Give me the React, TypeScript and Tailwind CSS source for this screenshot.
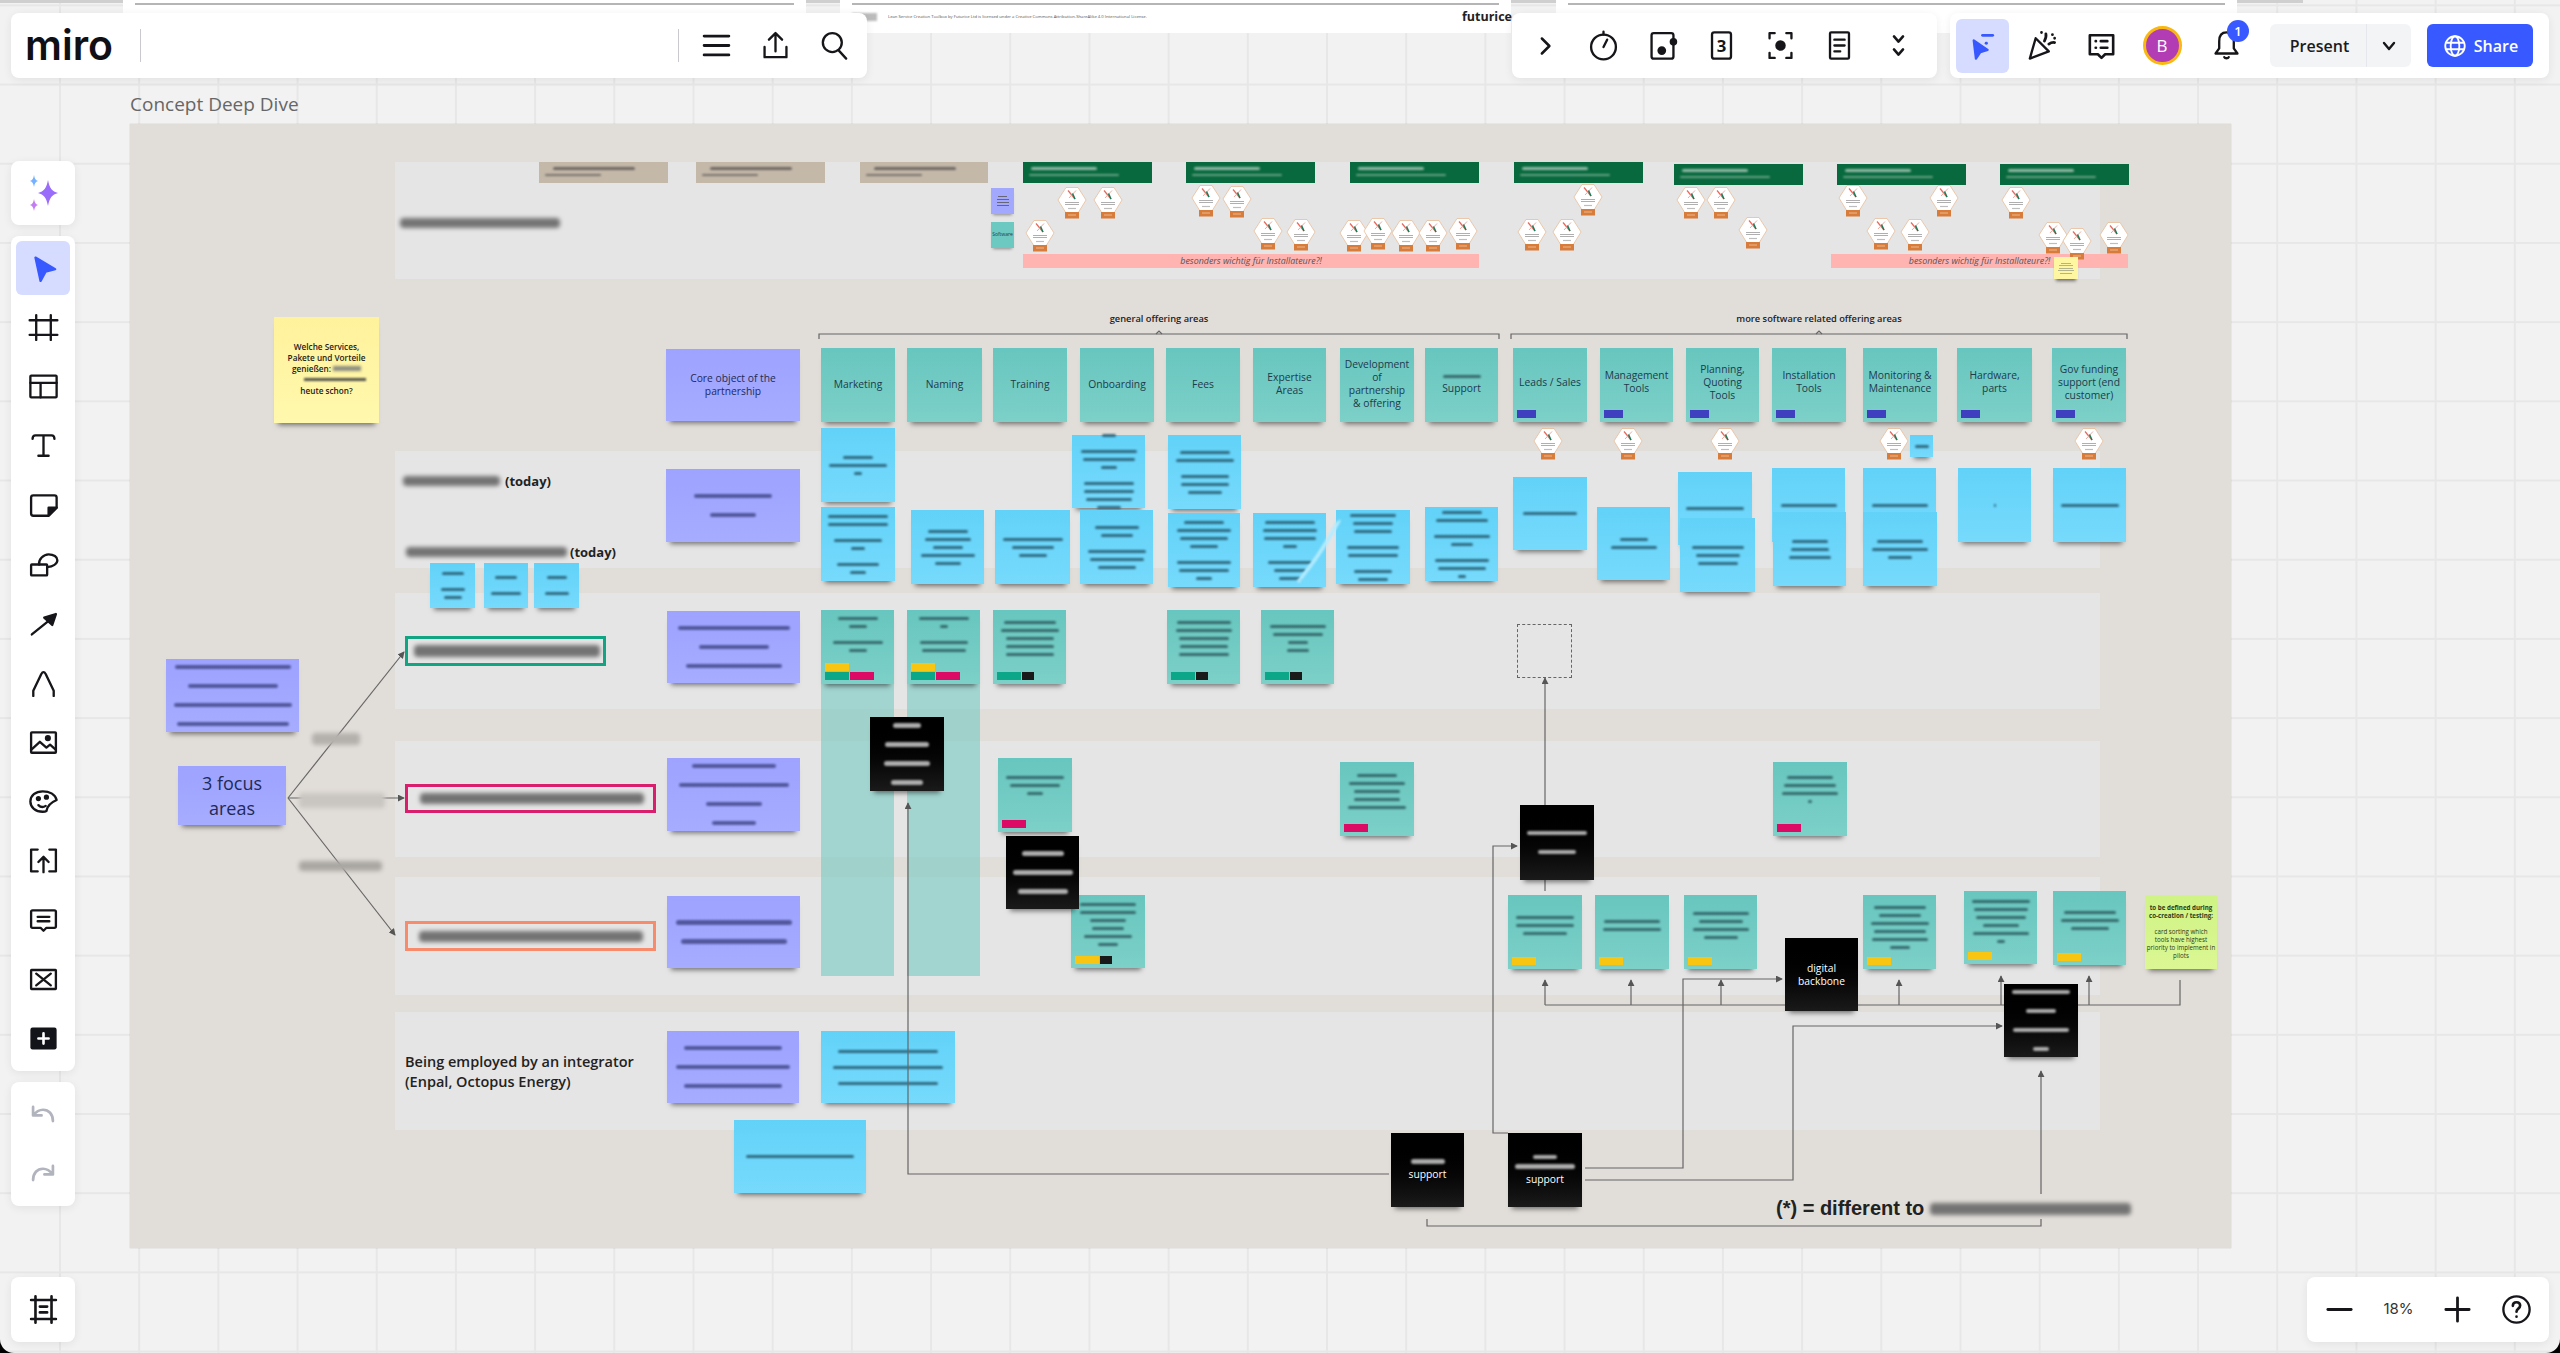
import React from 'react';

type Kind = 'teal' | 'blue' | 'purple' | 'black' | 'yellow' | 'green';
type Tag = [string, number];
interface St { k: Kind; x: number; y: number; w: number; h: number; t?: string[]; l?: number[]; pb?: number; tags?: Tag[][]; bar?: boolean; light?: boolean; fs?: number; }

const Y = 'bg-[#f9c513]', G = 'bg-[#0ca789]', P = 'bg-[#dc0a64]', K = 'bg-[#1a1a1a]';

const kindCls: Record<Kind, string> = {
  teal: 'bg-gradient-to-b from-[#67c6bf] to-[#7cd0c8] text-[#1e3a4c]',
  blue: 'bg-gradient-to-b from-[#62d2f8] to-[#76dafc] text-[#1e3a4c]',
  purple: 'bg-gradient-to-b from-[#9da3ff] to-[#a6acff] text-[#1f2a55]',
  black: 'bg-gradient-to-b from-[#000000] to-[#1a1a1a] text-[#dddddd]',
  yellow: 'bg-gradient-to-b from-[#fff29c] to-[#fff8ad] text-[#222222]',
  green: 'bg-gradient-to-b from-[#cff384] to-[#dbf794] text-[#2b3a1a]',
};
const lineCls: Record<Kind, string> = {
  teal: 'bg-[#2c5a60]',
  blue: 'bg-[#25596f]',
  purple: 'bg-[#454a8c]',
  black: 'bg-[#c9c9c9]',
  yellow: 'bg-[#555555]',
  green: 'bg-[#444444]',
};

const headers: [number, number, string[]][] = [
  [821, 74, ['Marketing']], [907, 75, ['Naming']], [993, 74, ['Training']], [1080, 74, ['Onboarding']],
  [1166, 74, ['Fees']], [1253, 73, ['Expertise', 'Areas']], [1340, 74, ['Development', 'of', 'partnership', '& offering']],
];
const headers2: [number, number, string[]][] = [
  [1513, 74, ['Leads / Sales']], [1600, 73, ['Management', 'Tools']], [1686, 73, ['Planning,', 'Quoting', 'Tools']], [1772, 74, ['Installation', 'Tools']],
  [1863, 74, ['Monitoring &', 'Maintenance']], [1957, 75, ['Hardware,', 'parts']], [2052, 74, ['Gov funding', 'support (end', 'customer)']],
];

const stickies: St[] = [
  { k: 'purple', x: 666, y: 349, w: 134, h: 72, t: ['Core object of the', 'partnership'] },
  ...headers.map(([x, w, t]) => ({ k: 'teal' as Kind, x, y: 348, w, h: 74, t, pb: 2 })),
  { k: 'teal', x: 1425, y: 348, w: 73, h: 74, l: [38], t: ['Support'], pb: 0 },
  ...headers2.map(([x, w, t]) => ({ k: 'teal' as Kind, x, y: 348, w, h: 74, t, bar: true, pb: 6 })),

  { k: 'blue', x: 821, y: 428, w: 74, h: 74, l: [30, 58, 8] },
  { k: 'blue', x: 1072, y: 435, w: 73, h: 73, l: [14, 0, 56, 52, 16, 0, 50, 50, 46, 24] },
  { k: 'blue', x: 1168, y: 435, w: 73, h: 74, l: [50, 58, 0, 48, 48, 34] },
  { k: 'blue', x: 1513, y: 477, w: 74, h: 73, l: [54] },
  { k: 'blue', x: 1678, y: 472, w: 74, h: 73, l: [58], pb: 0 },
  { k: 'blue', x: 1772, y: 468, w: 73, h: 74, l: [56], pb: 0 },
  { k: 'blue', x: 1863, y: 468, w: 73, h: 74, l: [56], pb: 0 },
  { k: 'blue', x: 1958, y: 468, w: 73, h: 74, l: [2] },
  { k: 'blue', x: 2053, y: 468, w: 73, h: 74, l: [58] },
  { k: 'blue', x: 1597, y: 507, w: 73, h: 73, l: [28, 46] },
  { k: 'blue', x: 1680, y: 518, w: 75, h: 74, l: [52, 44, 40] },
  { k: 'blue', x: 1773, y: 512, w: 73, h: 74, l: [36, 38, 42] },
  { k: 'blue', x: 1863, y: 512, w: 74, h: 74, l: [46, 56, 24] },

  { k: 'blue', x: 821, y: 507, w: 74, h: 74, l: [60, 60, 0, 48, 14, 0, 42, 16] },
  { k: 'blue', x: 911, y: 510, w: 73, h: 74, l: [40, 46, 30, 54, 26] },
  { k: 'blue', x: 995, y: 510, w: 75, h: 74, l: [60, 42, 28] },
  { k: 'blue', x: 1080, y: 510, w: 73, h: 74, l: [44, 32, 0, 58, 54, 38] },
  { k: 'blue', x: 1168, y: 513, w: 72, h: 74, l: [40, 54, 48, 28, 0, 54, 50, 16] },
  { k: 'blue', x: 1253, y: 513, w: 73, h: 74, l: [50, 54, 52, 14, 0, 44, 32, 22] },
  { k: 'blue', x: 1336, y: 510, w: 74, h: 74, l: [46, 40, 38, 0, 52, 50, 0, 38, 30] },
  { k: 'blue', x: 1425, y: 507, w: 73, h: 74, l: [40, 52, 0, 56, 22, 0, 54, 48, 8] },
  { k: 'blue', x: 430, y: 563, w: 45, h: 45, l: [22, 0, 24, 18] },
  { k: 'blue', x: 484, y: 563, w: 44, h: 45, l: [22, 0, 30] },
  { k: 'blue', x: 534, y: 563, w: 45, h: 45, l: [20, 0, 24] },
  { k: 'blue', x: 1910, y: 435, w: 23, h: 22, l: [14] },

  { k: 'purple', x: 666, y: 469, w: 134, h: 73, l: [78, 0, 46] },
  { k: 'purple', x: 667, y: 611, w: 133, h: 72, l: [112, 0, 70, 0, 96] },
  { k: 'purple', x: 667, y: 758, w: 133, h: 73, l: [84, 0, 110, 0, 56, 0, 44] },
  { k: 'purple', x: 667, y: 896, w: 133, h: 72, l: [116, 0, 106] },
  { k: 'purple', x: 667, y: 1031, w: 132, h: 72, l: [98, 0, 114, 0, 98] },
  { k: 'purple', x: 166, y: 659, w: 133, h: 73, l: [116, 0, 90, 0, 118, 0, 112] },
  { k: 'purple', x: 178, y: 766, w: 108, h: 59, t: ['3 focus', 'areas'], fs: 18 },

  { k: 'teal', x: 821, y: 610, w: 73, h: 74, l: [40, 18, 0, 50, 18], pb: 26, tags: [[[Y, 24]], [[G, 24], [P, 24]]] },
  { k: 'teal', x: 907, y: 610, w: 73, h: 74, l: [50, 8, 0, 48, 44], pb: 26, tags: [[[Y, 24]], [[G, 24], [P, 24]]] },
  { k: 'teal', x: 993, y: 610, w: 73, h: 74, l: [52, 58, 48, 48, 48], pb: 18, tags: [[[G, 24], [K, 12]]] },
  { k: 'teal', x: 1167, y: 610, w: 73, h: 74, l: [54, 56, 50, 48, 50], pb: 18, tags: [[[G, 24], [K, 12]]] },
  { k: 'teal', x: 1261, y: 610, w: 73, h: 74, l: [56, 50, 20, 22], pb: 18, tags: [[[G, 24], [K, 12]]] },
  { k: 'teal', x: 998, y: 758, w: 74, h: 74, l: [58, 50, 16], pb: 20, tags: [[[P, 24]]] },
  { k: 'teal', x: 1340, y: 762, w: 74, h: 74, l: [40, 56, 46, 46, 58], pb: 16, tags: [[[P, 24]]] },
  { k: 'teal', x: 1773, y: 762, w: 74, h: 74, l: [46, 52, 56, 4], pb: 20, tags: [[[P, 24]]] },
  { k: 'teal', x: 1071, y: 895, w: 74, h: 73, l: [56, 56, 36, 32, 48, 20], pb: 14, tags: [[[Y, 24], [K, 12]]] },
  { k: 'teal', x: 1508, y: 895, w: 74, h: 74, l: [58, 58, 44], pb: 14, tags: [[[Y, 24]]] },
  { k: 'teal', x: 1595, y: 895, w: 74, h: 74, l: [56, 58], pb: 14, tags: [[[Y, 24]]] },
  { k: 'teal', x: 1684, y: 895, w: 73, h: 74, l: [56, 44, 56, 34], pb: 14, tags: [[[Y, 24]]] },
  { k: 'teal', x: 1863, y: 895, w: 73, h: 74, l: [52, 42, 58, 52, 56, 20], pb: 10, tags: [[[Y, 24]]] },
  { k: 'teal', x: 1964, y: 891, w: 73, h: 73, l: [58, 54, 50, 36, 56, 8], pb: 12, tags: [[[Y, 24]]] },
  { k: 'teal', x: 2053, y: 891, w: 73, h: 74, l: [52, 58, 38], pb: 16, tags: [[[Y, 24]]] },

  { k: 'blue', x: 821, y: 1031, w: 134, h: 72, l: [100, 0, 110, 0, 100] },
  { k: 'blue', x: 734, y: 1120, w: 132, h: 73, l: [108] },
];

const blacks: St[] = [
  { k: 'black', x: 870, y: 717, w: 74, h: 74, l: [28, 0, 44, 0, 46, 0, 32] },
  { k: 'black', x: 1006, y: 836, w: 73, h: 73, l: [42, 0, 60, 0, 50] },
  { k: 'black', x: 1520, y: 805, w: 74, h: 75, l: [60, 0, 38] },
  { k: 'black', x: 1785, y: 938, w: 73, h: 73, t: ['digital', 'backbone'], light: true },
  { k: 'black', x: 2004, y: 984, w: 74, h: 73, l: [58, 0, 30, 0, 56, 0, 16] },
  { k: 'black', x: 1391, y: 1133, w: 73, h: 74, l: [34], t: ['support'], light: true },
  { k: 'black', x: 1508, y: 1133, w: 74, h: 74, l: [24, 60], t: ['support'], light: true },
];

const rows = [[162, 117], [451, 117], [593, 116], [741, 116], [877, 118], [1012, 118]];

const hexes: [number, number][] = [
  [1072, 187], [1108, 187], [1206, 185], [1237, 186], [1588, 184], [1691, 187], [1721, 187], [1853, 185], [1944, 185], [2016, 187],
  [1040, 220], [1268, 218], [1301, 219], [1354, 220], [1378, 218], [1406, 220], [1433, 220], [1463, 218], [1532, 219], [1567, 219], [1753, 217], [1881, 218], [1915, 219], [2053, 222], [2114, 222],
  [1548, 428], [1628, 428], [1725, 428], [1894, 428], [2089, 428],
];

const lines: { p: string; a?: boolean }[] = [
  { p: '288,798 404,652', a: true },
  { p: '288,798 404,798', a: true },
  { p: '288,798 395,935', a: true },
  { p: '1545,806 1545,678', a: true },
  { p: '1545,880 1545,891' },
  { p: '1545,1005 1545,980', a: true },
  { p: '1631,1005 1631,980', a: true },
  { p: '1721,1005 1721,980', a: true },
  { p: '1899,1005 1899,980', a: true },
  { p: '2001,1005 2001,976', a: true },
  { p: '2089,1005 2089,976', a: true },
  { p: '1545,1005 2180,1005 2180,980' },
  { p: '1585,1168 1683,1168 1683,979 1782,979', a: true },
  { p: '1585,1180 1793,1180 1793,1026 2002,1026', a: true },
  { p: '1508,1133 1493,1133 1493,846 1517,846', a: true },
  { p: '1389,1174 908,1174 908,803', a: true },
  { p: '2041,1194 2041,1071', a: true },
  { p: '1427,1219 1427,1226 2041,1226 2041,1219' },
  { p: '819,339 819,334 1499,334 1499,339' },
  { p: '1511,339 1511,334 2127,334 2127,339' },
  { p: '1156,334 1159,331 1162,334' },
  { p: '1816,334 1819,331 1822,334' },
];

const I = ({ children, s = 35, c = '#16161a', sw = 1.6 }: { children: React.ReactNode; s?: number; c?: string; sw?: number }) => (
  <svg width={s} height={s} viewBox="0 0 24 24" fill="none" stroke={c} strokeWidth={sw} strokeLinecap="round" strokeLinejoin="round">{children}</svg>
);

const tools: React.ReactNode[] = [
  <I c="#3859ff"><path d="M6.500 4.500 20 12.500l-6.500 1.600L10 20.500z" fill="#3859ff" /></I>,
  <I><path d="M7 3.500v17M17 3.500v17M2.500 7h19M2.500 17h19" /></I>,
  <I><rect x="3" y="4.500" width="18" height="15" rx=".6" /><path d="M3 9.500h18M10 9.500v10" /></I>,
  <I><path d="M4.500 7.500c0-1.500.5-2.500 2-2.500h11c1.500 0 2 1 2 2.500M12 5v14M8.500 19h7" /></I>,
  <I><path d="M3.500 6.500q0-1.500 1.500-1.500h14.500q1.500 0 1.500 1.500v7l-5.500 5.500H5q-1.500 0-1.500-1.500z" /><path d="M21 13.500h-5.500V19z" fill="#16161a" /></I>,
  <I><rect x="3.500" y="12" width="11" height="7.500" rx=".5" /><path d="M9 12c-.5-3.500 3-7 6.500-7 3.500 0 6 1.800 6 4 0 2.500-3 4.300-7 4.800" /></I>,
  <I><path d="M4 19.500 17 9" /><path d="M20.500 5.500 12.500 8l5.500 5z" fill="#16161a" /></I>,
  <I><path d="M5 20.500V17l5.500-11.500q1.500-2.500 3 0L19 17v3.500" /></I>,
  <I><rect x="3.500" y="5" width="17" height="14" rx=".5" /><path d="m3.500 17 6-5.500 4.500 4 2.500-2 4 3.500" /><circle cx="15" cy="9" r="1.300" fill="#16161a" /></I>,
  <I><path d="M21 11c-1-4-5-6-9.500-6C6.500 5 3 8 3 12s3.500 7 8.500 7c1 0 2-.2 2.500-.5 .5-3 3.500-6 7-7.500z" /><path d="M8.500 14.500c1.500 1.500 3.500 1.500 5 .5" /><circle cx="8.500" cy="10" r="1" fill="#16161a" /><circle cx="14" cy="9" r="1" fill="#16161a" /></I>,
  <I><path d="M8 4.500H3.500v15H8M16 4.500h4.500v15H16M12 20V10M8.500 13l3.500-3.500 3.500 3.500" /></I>,
  <I><path d="M3.500 6q0-1 1-1h15q1 0 1 1v10q0 1-1 1h-5.500L12 19l-2-2H4.500q-1 0-1-1zM8 9.500h8M8 12.500h8" /></I>,
  <I><rect x="3.500" y="5.500" width="17" height="13" rx=".3" /><path d="m7 8 10 8M17 8 7 16" /></I>,
  <svg width="35" height="35" viewBox="0 0 24 24"><rect x="3" y="4.500" width="18" height="15" rx="1.500" fill="#13131a" /><path d="M12 8.500v7M8.500 12h7" stroke="#fff" strokeWidth="1.800" strokeLinecap="round" /></svg>,
];

const right: React.ReactNode[] = [
  <I s={30} sw={2}><path d="m9.500 6 6 6-6 6" /></I>,
  <I><circle cx="12" cy="13" r="8.500" /><path d="M12 2.500v2M12 13l2.500-5" /></I>,
  <I><rect x="4.500" y="3.500" width="15" height="17.500" rx="1.500" /><circle cx="11.500" cy="15.500" r="2.200" fill="#16161a" /><circle cx="19.500" cy="9.500" r="1.800" fill="#16161a" /></I>,
  <I><rect x="5.500" y="3" width="13" height="18" rx="1.500" /><text x="12" y="16.500" textAnchor="middle" fontSize="11.500" fontWeight="700" fill="#16161a" stroke="none" fontFamily="'Open Sans',sans-serif">3</text></I>,
  <I><path d="M8 3.500H4.500V7M16 3.500h3.500V7M8 20.500H4.500V17M16 20.500h3.500V17" /><circle cx="12" cy="12" r="2.800" fill="#16161a" /></I>,
  <I><rect x="5.500" y="3" width="13" height="18" rx=".8" /><path d="M8.500 8h7M8.500 12h7M8.500 16h4" /></I>,
  <I s={31} sw={2}><path d="m8.500 5 3.500 4 3.500-4M8.500 15l3.500 4 3.500-4" /></I>,
];

const Hex = ({ cx, top }: { cx: number; top: number }) => (
  <svg className="absolute" style={{ left: cx - 15, top }} width="30" height="32" viewBox="0 0 30 32">
    <polygon points="9,.5 21,.5 29,13 21,26 9,26 1,13" fill="#fff" stroke="#e9bd99" strokeWidth=".8" />
    <path d="M11 3.500 18 12" stroke="#e8685c" strokeWidth="1.200" />
    <path d="M19 3.500 12 11" stroke="#f0a9a0" strokeWidth="1" />
    <path d="M15.500 6.500 18 12" stroke="#177a58" strokeWidth="1.500" />
    <path d="M8 15.500h14M8 17.500h14" stroke="#9a9a9a" strokeWidth=".8" />
    <path d="M11 21.500h8" stroke="#bdbdbd" strokeWidth="1.200" />
    <rect x="8" y="25" width="14" height="6.500" fill="#d87c3c" />
    <path d="M11 28h8" stroke="#f2c8a4" strokeWidth=".8" />
  </svg>
);

const Sticky = ({ s }: { s: St }) => (
  <div
    className={`absolute flex flex-col items-center justify-center shadow-[0_6px_5px_-4px_rgba(0,0,0,0.5)] ${kindCls[s.k]}`}
    style={{ left: s.x, top: s.y, width: s.w, height: s.h, paddingBottom: s.pb ?? 0 }}
  >
    {s.l && s.l.length > 0 && (
      <div className={`flex flex-col items-center gap-[5px] ${s.t ? 'mb-[4px]' : ''}`}>
        {s.l.map((w, i) => (
          <div key={i} className={`rounded-full blur-[1.2px] ${w ? lineCls[s.k] : ''} ${s.k === 'purple' || s.k === 'black' ? 'h-[4.500px]' : 'h-[3px]'}`} style={{ width: w, opacity: w ? 0.85 : 0 }} />
        ))}
      </div>
    )}
    {s.t && (
      <div className={`text-center ${s.light ? 'text-white' : ''}`} style={{ fontSize: s.fs ?? 10.3, lineHeight: s.fs ? '25px' : '13px' }}>
        {s.t.map((t, i) => (
          <div key={i} className="whitespace-nowrap">{t}</div>
        ))}
      </div>
    )}
    {s.bar && <div className="absolute left-[4px] bottom-[4px] h-[8px] w-[19px] bg-[#3e40bf]" />}
    {s.tags && (
      <div className="absolute left-[4px] bottom-[4px] flex flex-col gap-[1px]">
        {s.tags.map((r, i) => (
          <div key={i} className="flex gap-[1px]">
            {r.map(([c, w], j) => <div key={j} className={`h-[8px] ${c}`} style={{ width: w }} />)}
          </div>
        ))}
      </div>
    )}
  </div>
);

const Blur = ({ x, y, w, h, c = 'bg-[#737373]' }: { x: number; y: number; w: number; h: number; c?: string }) => (
  <div className={`absolute rounded-sm blur-[2px] ${c}`} style={{ left: x, top: y, width: w, height: h }} />
);

const panel = 'rounded-lg bg-white shadow-[0_2px_10px_rgba(0,0,0,0.07)]';

export default function App() {
  return (
    <div className="h-[1353px] w-[2560px] overflow-hidden bg-black font-['Open_Sans',sans-serif]">
      <div className="relative h-full w-full overflow-hidden rounded-b-[14px] bg-[#f2f2f2] bg-[linear-gradient(to_right,#e7e7e7_1.5px,transparent_1.5px),linear-gradient(to_bottom,#e7e7e7_1.5px,transparent_1.5px)] bg-[size:79.2px_79.2px] bg-[position:59px_4.4px]">
        {/* slide strip at the top */}
        <div className="absolute left-0 top-0 h-[3px] w-[2303px] bg-[#cfcfcf]" />
        {[[123, 683], [840, 671], [1556, 681]].map(([x, w]) => (
          <div key={x} className="absolute top-0 h-[33px] bg-white" style={{ left: x, width: w }}>
            <div className="mx-[12px] mt-[3px] h-[2px] bg-[#b5b5b5]" />
          </div>
        ))}
        <div className="absolute left-[852px] top-[13px] h-[8px] w-[25px] bg-[#bbbbbb] blur-[1px]" />
        <div className="absolute left-[888px] top-[14px] whitespace-nowrap text-[4.200px] leading-[6px] text-[#555555]">
          Lean Service Creation Toolbox by Futurice Ltd is licensed under a Creative Commons Attribution-ShareAlike 4.0 International License.
        </div>
        <div className="absolute left-[1462px] top-[8px] text-[12.500px] font-bold leading-[18px] text-[#222222]">futurice</div>

        {/* frame */}
        <div className="absolute left-[130px] top-[91px] text-[19px] leading-[26px] text-[#666666]">Concept Deep Dive</div>
        <div className="absolute left-[130px] top-[124px] h-[1124px] w-[2101px] bg-[#e1ddd9] shadow-[0_0_1px_rgba(0,0,0,0.25)]" />

        {rows.map(([y, h]) => (
          <div key={y} className="absolute left-[395px] w-[1705px] bg-[#e5e5e5]" style={{ top: y, height: h }} />
        ))}

        {/* top row headers */}
        {[[539, 129], [696, 129], [860, 128]].map(([x, w]) => (
          <div key={x} className="absolute top-[162px] h-[21px] bg-[#c4b8a9]" style={{ left: x, width: w }}>
            <div className="ml-[14px] mt-[5px] h-[3px] w-[82px] rounded-full bg-[#6f6a62] blur-[1px]" />
            <div className="ml-[6px] mt-[4px] h-[2px] w-[56px] rounded-full bg-[#7a756c] blur-[1px]" />
          </div>
        ))}
        {[[1023, 162], [1186, 162], [1350, 162], [1514, 162], [1674, 164], [1837, 164], [2000, 164]].map(([x, y]) => (
          <div key={x} className="absolute h-[21px] w-[129px] bg-[#07693d]" style={{ left: x, top: y }}>
            <div className="ml-[8px] mt-[5px] h-[3px] w-[66px] rounded-full bg-[#b4cdbf] opacity-80 blur-[1px]" />
            <div className="ml-[6px] mt-[4px] h-[2px] w-[90px] rounded-full bg-[#8fb8a3] opacity-70 blur-[1px]" />
          </div>
        ))}
        <Blur x={400} y={218} w={160} h={10} />
        <div className="absolute left-[991px] top-[188px] flex h-[26px] w-[23px] flex-col items-center justify-center gap-[2px] bg-[#a3a8ff] shadow-[0_3px_3px_-2px_rgba(0,0,0,0.4)]">
          <div className="h-[1px] w-[9px] bg-[#667]" /><div className="h-[1px] w-[12px] bg-[#667]" /><div className="h-[1px] w-[12px] bg-[#667]" /><div className="h-[1px] w-[12px] bg-[#667]" />
        </div>
        <div className="absolute left-[991px] top-[222px] flex h-[26px] w-[23px] items-center justify-center bg-[#6cc9c1] text-[5px] text-[#1e3a4c] shadow-[0_3px_3px_-2px_rgba(0,0,0,0.4)]">Software</div>
        <div className="absolute left-[1023px] top-[254px] flex h-[14px] w-[456px] items-center justify-center bg-[#ffb4b2] text-[8.900px] italic text-[#555555]">besonders wichtig für Installateure?!</div>
        <div className="absolute left-[1831px] top-[254px] flex h-[14px] w-[297px] items-center justify-center bg-[#ffb4b2] text-[8.900px] italic text-[#555555]">besonders wichtig für Installateure?!</div>
        {hexes.map(([x, y], i) => <Hex key={i} cx={x} top={y} />)}
        <Hex cx={2077} top={228} />
        <div className="absolute left-[2054px] top-[257px] flex h-[22px] w-[24px] flex-col items-center justify-center gap-[1.500px] bg-[#fff6a2] shadow-[0_4px_3px_-2px_rgba(0,0,0,0.5)]">
          {[10, 14, 14, 16, 12].map((w, i) => <div key={i} className="h-[1px] bg-[#b4b48a]" style={{ width: w }} />)}
        </div>

        {/* section titles */}
        <div className="absolute left-[1059px] top-[311px] w-[200px] text-center text-[9.300px] font-semibold leading-[16px] text-[#222222]">general offering areas</div>
        <div className="absolute left-[1699px] top-[311px] w-[240px] text-center text-[9.300px] font-semibold leading-[16px] text-[#222222]">more software related offering areas</div>

        {/* translucent columns */}
        <div className="absolute left-[821px] top-[684px] h-[292px] w-[73px] bg-[#6cc9c0]/55" />
        <div className="absolute left-[907px] top-[684px] h-[292px] w-[73px] bg-[#6cc9c0]/55" />

        {/* yellow question note */}
        <div className="absolute left-[274px] top-[317px] flex h-[106px] w-[105px] flex-col items-center justify-center bg-gradient-to-b from-[#fff29c] to-[#fff8ad] pb-[3px] text-[8.200px] font-semibold leading-[11.200px] text-[#222222] shadow-[0_6px_5px_-4px_rgba(0,0,0,0.5)]">
          <div>Welche Services,</div>
          <div>Pakete und Vorteile</div>
          <div className="flex items-center gap-[2px]">genießen:<span className="h-[5px] w-[28px] bg-[#8c8c80] blur-[1.500px]" /></div>
          <div className="ml-[16px] h-[11.200px] pt-[4px]"><div className="h-[3px] w-[62px] bg-[#55554d] blur-[1px]" /></div>
          <div>heute schon?</div>
        </div>

        {stickies.map((s, i) => <Sticky key={i} s={s} />)}

        {/* whitish smear between two notes */}
        <svg className="absolute left-[1290px] top-[510px] blur-[1px]" width="60" height="80" fill="none">
          <path d="M8 72 Q30 45 48 12" stroke="#b4ecff" strokeWidth="3.500" />
          <path d="M18 60 Q34 40 50 10" stroke="#b4ecff" strokeWidth="2" />
        </svg>

        {/* labels */}
        <Blur x={403} y={476} w={97} h={10} />
        <div className="absolute left-[505px] top-[472px] text-[13px] font-bold leading-[18px] text-[#222222]">(today)</div>
        <Blur x={406} y={547} w={161} h={10} />
        <div className="absolute left-[570px] top-[543px] text-[13px] font-bold leading-[18px] text-[#222222]">(today)</div>
        <div className="absolute left-[405px] top-[1052px] text-[14.500px] font-semibold leading-[20px] text-[#222222]">
          <div>Being employed by an integrator</div>
          <div>(Enpal, Octopus Energy)</div>
        </div>

        <div className="absolute left-[405px] top-[636px] h-[30px] w-[201px] border-[3px] border-[#12a584]"><Blur x={6} y={6} w={186} h={12} /></div>
        <div className="absolute left-[405px] top-[784px] h-[29px] w-[251px] border-[3px] border-[#d81e6c]"><Blur x={12} y={6} w={224} h={11} /></div>
        <div className="absolute left-[405px] top-[921px] h-[30px] w-[251px] border-[3px] border-[#f78b6b]"><Blur x={11} y={7} w={224} h={11} /></div>

        <div className="absolute left-[1517px] top-[624px] h-[54px] w-[55px] border border-dashed border-[#666666]" />

        {/* connectors */}
        <svg className="absolute left-0 top-0" width="2560" height="1353" fill="none">
          <defs>
            <marker id="ah" viewBox="0 0 8 8" refX="7" refY="4" markerWidth="7" markerHeight="7" markerUnits="userSpaceOnUse" orient="auto">
              <path d="M0 0 8 4 0 8z" fill="#555555" />
            </marker>
          </defs>
          {lines.map((l, i) => (
            <polyline key={i} points={l.p} stroke="#666666" strokeWidth="1.200" markerEnd={l.a ? 'url(#ah)' : undefined} />
          ))}
        </svg>

        {/* blurred labels over the connectors */}
        <Blur x={312} y={733} w={48} h={12} c="bg-[#b4b1ad]" />
        <Blur x={299} y={793} w={86} h={15} c="bg-[#c9c6c2]" />
        <Blur x={299} y={861} w={83} h={10} c="bg-[#aaa7a3]" />

        {blacks.map((s, i) => <Sticky key={i} s={s} />)}

        {/* green note */}
        <div className="absolute left-[2145px] top-[895px] flex h-[74px] w-[72px] flex-col items-center justify-center whitespace-nowrap bg-gradient-to-b from-[#cff384] to-[#dbf794] text-center text-[6.200px] leading-[8px] text-[#2b3a1a] shadow-[0_6px_5px_-4px_rgba(0,0,0,0.5)]">
          <div className="font-bold">to be defined during</div>
          <div className="mb-[8px] font-bold">co-creation / testing:</div>
          <div>card sorting which</div>
          <div>tools have highest</div>
          <div>priority to implement in</div>
          <div>pilots</div>
        </div>

        <div className="absolute left-[1776px] top-[1194px] font-['Liberation_Sans',sans-serif] text-[20px] font-bold leading-[28px] text-[#222222]">(*) = different to</div>
        <Blur x={1930} y={1203} w={201} h={12} />

        {/* top bar */}
        <div className="absolute left-[11px] right-[11px] top-[13px] flex h-[65px] gap-[13px]">
          <div className={`mr-auto flex w-[856px] items-center ${panel}`}>
            <div className="w-[129px] pl-[14px] font-['Inter',sans-serif] text-[41px] font-semibold leading-[65px] text-[#101014]">miro</div>
            <div className="h-[33px] w-[1px] bg-[#c9c9d0]" />
            <div className="flex-1" />
            <div className="h-[33px] w-[1px] bg-[#c9c9d0]" />
            <div className="flex w-[188px] items-center pl-[8px]">
              <div className="flex w-[59px] justify-center"><I sw={1.900}><path d="M3.500 5.500h17M3.500 12h17M3.500 18.500h17" /></I></div>
              <div className="flex w-[59px] justify-center"><I><path d="M4.500 13v7h15v-7M12 16V3.500M7.500 8 12 3.500 16.500 8" /></I></div>
              <div className="flex w-[59px] justify-center"><I><circle cx="10.500" cy="10" r="6.500" /><path d="m15 15.500 5 5.500" /></I></div>
            </div>
          </div>

          <div className={`flex w-[425px] items-center pl-[3px] ${panel}`}>
            {right.map((n, i) => <div key={i} className="flex w-[59px] justify-center">{n}</div>)}
          </div>

          <div className={`flex w-[599px] items-center pl-[6px] ${panel}`}>
            <div className="flex h-[54px] w-[53px] items-center justify-center rounded-md bg-[#d5dcff]">
              <I c="#3859ff"><path d="M6 8.500 15.500 15l-5 1.500L7.500 21z" fill="#3859ff" /><path d="M12 5h7" strokeWidth="1.900" /><path d="M14.500 10.500h.2" strokeWidth="2" /></I>
            </div>
            <div className="ml-[2px] flex w-[60px] justify-center">
              <I><path d="m4 21 4-14 9 9z" /><path d="M14 9c1-2 1.500-3 1-5M17 11c1.500-1 3-1.200 4-1M19.500 4.500v.1M21 7v.1M12 3v.1" strokeWidth="1.900" /></I>
            </div>
            <div className="flex w-[60px] justify-center">
              <I><path d="M4 5h16v13h-5.500L12 20.500 9.500 18H4zM8 9h.2M8 13.500h.2M11.500 9H16M11.500 13.500H16" strokeWidth="1.800" /></I>
            </div>
            <div className="flex w-[62px] justify-center">
              <div className="flex h-[39px] w-[39px] items-center justify-center rounded-full border-[3px] border-[#f9b80f] bg-[#b23cb3] text-[17px] font-medium text-white">B</div>
            </div>
            <div className="relative flex w-[66px] justify-center">
              <I><path d="M12 3c-3.500 0-5 2.500-5 6v5l-2.500 3.500h15L17 14V9c0-3.500-1.500-6-5-6zM10.500 20c.5 1 2.500 1 3 0" /></I>
              <div className="absolute left-[34px] top-[-8px] flex h-[22px] w-[22px] items-center justify-center rounded-full bg-[#3859ff] text-[13px] font-semibold leading-none text-white">1</div>
            </div>
            <div className="ml-[11px] flex h-[43px] w-[141px] items-center rounded-md bg-[#f3f4f6]">
              <div className="flex h-full w-[97px] items-center justify-center border-r border-[#e6e7ec] pl-[3px] text-[16px] font-semibold text-[#1a1b1f]">Present</div>
              <div className="flex flex-1 justify-center"><I s={24} sw={2.400}><path d="m7 9 5 6 5-6" /></I></div>
            </div>
            <div className="ml-[16px] flex h-[43px] w-[106px] items-center justify-center gap-[6px] rounded-md bg-[#3859ff] text-[16px] font-semibold text-white">
              <I s={26} c="#ffffff" sw={1.700}><circle cx="12" cy="12" r="9" /><ellipse cx="12" cy="12" rx="4" ry="9" /><path d="M3.500 9h17M3.500 15h17" /></I>
              Share
            </div>
          </div>
        </div>

        {/* left toolbar */}
        <div className="absolute left-[11px] top-[161px] flex w-[64px] flex-col gap-[11px]">
          <div className={`flex h-[64px] items-center justify-center ${panel}`}>
            <svg width="40" height="44" viewBox="0 0 40 44">
              <path d="M25 9c1.500 8 4 11.500 10 13-6 1.500-8.500 5-10 13-1.500-8-4-11.500-10-13 6-1.500 8.500-5 10-13z" fill="#9a6cfa" />
              <path d="M11 4c.6 3.500 1.500 5 4 6-2.500 1-3.400 2.500-4 6-.6-3.500-1.500-5-4-6 2.500-1 3.400-2.500 4-6z" fill="#74b2ff" />
              <path d="M11 28c.6 3.500 1.500 5 4 6-2.500 1-3.400 2.500-4 6-.6-3.500-1.500-5-4-6 2.500-1 3.400-2.500 4-6z" fill="#c47cf2" />
            </svg>
          </div>
          <div className={`flex h-[835px] flex-col items-center gap-[5.300px] pt-[5px] ${panel}`}>
            {tools.map((n, i) => (
              <div key={i} className={`flex h-[54px] w-[54px] shrink-0 items-center justify-center rounded-md ${i === 0 ? 'bg-[#d5dcff]' : ''}`}>{n}</div>
            ))}
          </div>
          <div className={`flex h-[124px] flex-col items-center gap-[25px] pt-[15px] ${panel}`}>
            <I s={34} c="#b1b3bd" sw={1.900}><path d="M19 17c0-5-3-8-7-8-3 0-5 1.500-7 4M5 7v6h6" /></I>
            <I s={34} c="#b1b3bd" sw={1.900}><path d="M5 17c0-5 3-8 7-8 3 0 5 1.500 7 4M19 7v6h-6" /></I>
          </div>
          <div className={`mt-[60px] flex h-[65px] items-center justify-center ${panel}`}>
            <I><path d="M6.500 3v18M17.500 3v18M3.500 5.500h17M3.500 18.500h17" strokeWidth="1.800" /><path d="M9.500 10h5M9.500 14h5" strokeWidth="1.800" /></I>
          </div>
        </div>

        {/* zoom controls */}
        <div className={`absolute left-[2307px] top-[1277px] flex h-[65px] w-[242px] items-center pl-[3px] ${panel}`}>
          <div className="flex w-[59px] justify-center"><I sw={1.900}><path d="M4 12h16" /></I></div>
          <div className="w-[59px] text-center font-['Inter',sans-serif] text-[15px] text-[#333333]">18%</div>
          <div className="flex w-[59px] justify-center"><I sw={1.900}><path d="M4 12h16M12 4v16" /></I></div>
          <div className="flex w-[59px] justify-center"><I><circle cx="12" cy="12" r="9" /><path d="M9.500 9.500c0-1.500 1-2.500 2.500-2.500s2.500 1 2.500 2.300c0 2.200-2.500 2-2.500 4.200M12 16.800v.1" strokeWidth="1.800" /></I></div>
        </div>
      </div>
    </div>
  );
}
